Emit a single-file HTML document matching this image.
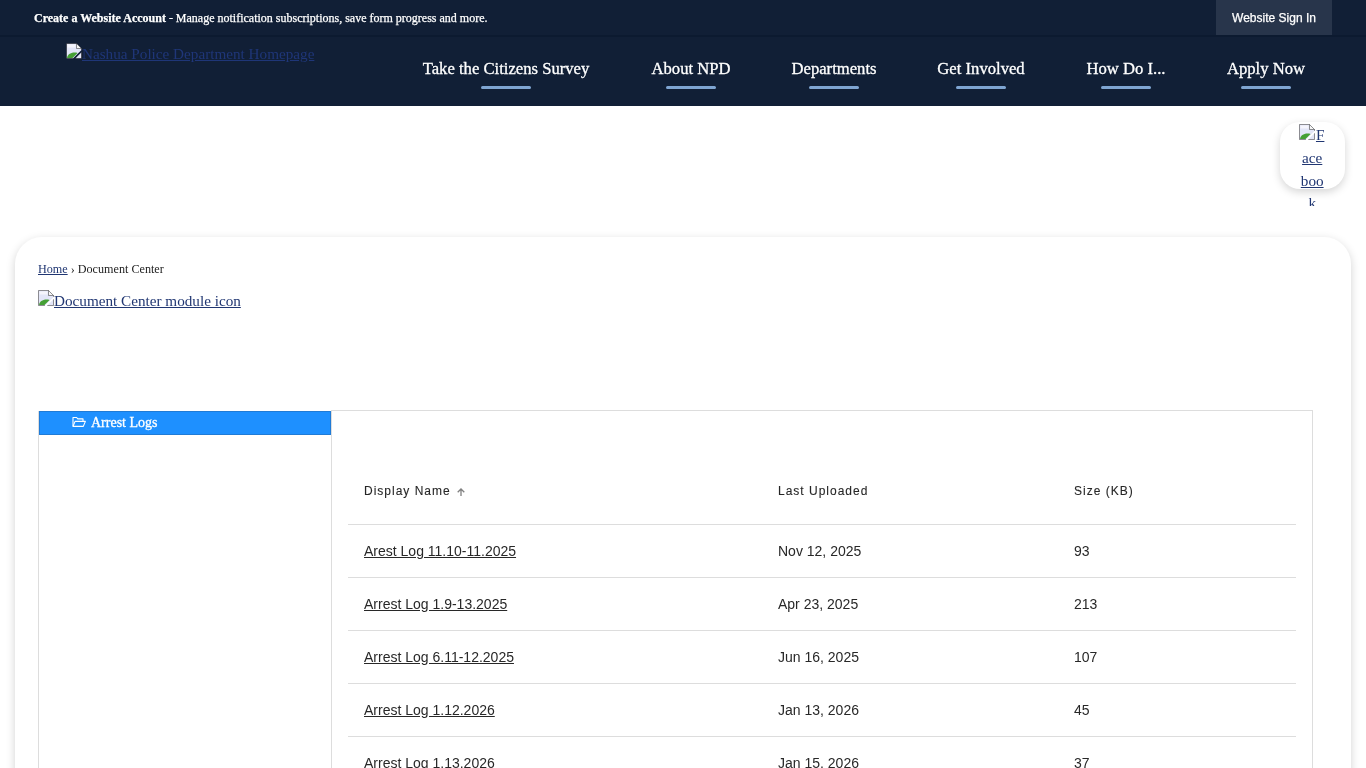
<!DOCTYPE html>
<html lang="en">
<head>
<meta charset="utf-8">
<title>Document Center • Nashua Police Department</title>
<style>
*{box-sizing:border-box;margin:0;padding:0}
html,body{width:1366px;height:768px;overflow:hidden;background:#fff}
body{position:relative;font-family:"Liberation Serif",serif;color:#222}
a{color:#203672;text-decoration:underline}
.abs{position:absolute;white-space:nowrap;will-change:transform}

/* top bar */
#topbar{left:0;top:0;width:1366px;height:35px;background:#111f36}
#topmsg{left:34px;top:11px;font-size:12px;line-height:14px;color:#fff;-webkit-text-stroke:.25px #fff}
#topmsg b{font-weight:bold}
#signin{left:1216px;top:0;width:116px;height:35px;background:#28354b;color:#fff;
  font-family:"Liberation Sans",sans-serif;font-size:12px;line-height:37px;text-align:center;-webkit-text-stroke:.25px #fff}

/* nav bar */
#navbar{left:0;top:35px;width:1366px;height:71px;background:#111f36;box-shadow:inset 0 2px 0 #0c1a30}
.brokenimg{display:inline-block;width:16px;height:16px;vertical-align:baseline}
#logo{left:66px;top:43px;font-size:15.2px;line-height:18px}
#logo a{color:#1f3678}
.nav{top:59px;font-size:16.65px;line-height:20px;color:#fff;text-align:center;transform:translateX(-50%);-webkit-text-stroke:.3px #fff}
.bar{top:86px;width:50px;height:3px;background:#7fa5d2;border-radius:1.5px;transform:translateX(-50%)}

/* facebook */
#fbwrap{left:1270px;top:110px;width:96px;height:96px;overflow:hidden}
#fb{position:absolute;left:10px;top:12px;width:65px;height:67px;border-radius:20px;background:#fff;
  box-shadow:0 3px 9px rgba(0,0,0,.17)}
#fbtxt{position:absolute;left:29.2px;top:14px;width:26px;font-size:15.2px;line-height:22.8px;text-align:center;
  word-break:break-all;white-space:normal}
#fbtxt .brokenimg{margin-left:-1px;margin-right:1px}

/* card */
#card{left:15px;top:237px;width:1336px;height:600px;border-radius:27px 27px 0 0;background:#fff;
  box-shadow:0 3px 10px rgba(0,0,0,.18)}
#crumb{left:38px;top:262px;font-size:12.15px;line-height:14px;color:#222}
#modicon{left:38px;top:290px;font-size:15.2px;line-height:18px}

/* panels */
#side{left:38px;top:411px;width:294px;height:400px;border-left:1px solid #ddd;border-right:1px solid #ddd}
#sel{left:39px;top:411px;width:292px;height:24px;background:#1e90ff;box-shadow:inset 0 0 0 1px rgba(40,60,90,.25)}
#seltxt{left:91px;top:415px;font-size:14px;line-height:16px;color:#fff;-webkit-text-stroke:.3px #fff}
#folder{left:72px;top:416px}
#main{left:331px;top:410px;width:982px;height:400px;border:1px solid #ddd;border-bottom:0}

.th{font-family:"Liberation Sans",sans-serif;font-size:12px;line-height:14px;letter-spacing:1px;color:#262626;-webkit-text-stroke:.1px #262626}
.td{font-family:"Liberation Sans",sans-serif;font-size:14px;line-height:16px;color:#282828}
.td a{color:#282828}
.hr{left:348px;width:948px;height:1px;background:#ddd}
</style>
</head>
<body>

<div id="topbar" class="abs"></div>
<div id="topmsg" class="abs"><b>Create a Website Account</b> - Manage notification subscriptions, save form progress and more.</div>
<div id="signin" class="abs">Website Sign In</div>

<div id="navbar" class="abs"></div>
<div id="logo" class="abs"><a><svg class="brokenimg" viewBox="0 0 16 16"><path d="M.5 .5H10.5L15.5 5.5V6.9L6.9 15.5H.5Z" fill="#e3e6f8"/><path d="M15.5 9.3V15.5H9.3Z" fill="#e3e6f8"/><path d="M1.5 1.5H9.5V4.5H1.5Z" fill="#f5f5fc"/><path d="M10.5 .5V5.5H15.5Z" fill="#f6f6f6"/><path d="M1 15C1.6 11.2 5.4 8.7 11.6 9.9L6.5 15Z" fill="#45a035"/><path d="M6.9 15.5H.5V.5H10.5L15.5 5.5V6.9M10.5 .5V5.5H15.5M15.5 9.3V15.5H9.3" fill="none" stroke="rgba(0,0,0,.42)"/></svg>Nashua Police Department Homepage</a></div>

<div class="abs nav" style="left:506px">Take the Citizens Survey</div>
<div class="abs nav" style="left:691px">About NPD</div>
<div class="abs nav" style="left:834px">Departments</div>
<div class="abs nav" style="left:981px">Get Involved</div>
<div class="abs nav" style="left:1126px">How Do I...</div>
<div class="abs nav" style="left:1266px">Apply Now</div>
<div class="abs bar" style="left:506px"></div>
<div class="abs bar" style="left:691px"></div>
<div class="abs bar" style="left:834px"></div>
<div class="abs bar" style="left:981px"></div>
<div class="abs bar" style="left:1126px"></div>
<div class="abs bar" style="left:1266px"></div>

<div id="fbwrap" class="abs">
  <div id="fb"></div>
  <div id="fbtxt"><a><svg class="brokenimg" viewBox="0 0 16 16"><path d="M.5 .5H10.5L15.5 5.5V6.9L6.9 15.5H.5Z" fill="#e3e6f8"/><path d="M15.5 9.3V15.5H9.3Z" fill="#e3e6f8"/><path d="M1.5 1.5H9.5V4.5H1.5Z" fill="#f5f5fc"/><path d="M10.5 .5V5.5H15.5Z" fill="#f6f6f6"/><path d="M1 15C1.6 11.2 5.4 8.7 11.6 9.9L6.5 15Z" fill="#45a035"/><path d="M6.9 15.5H.5V.5H10.5L15.5 5.5V6.9M10.5 .5V5.5H15.5M15.5 9.3V15.5H9.3" fill="none" stroke="rgba(0,0,0,.42)"/></svg>Facebook</a></div>
</div>

<div id="card" class="abs"></div>
<div id="crumb" class="abs"><a>Home</a> › Document Center</div>
<div id="modicon" class="abs"><a><svg class="brokenimg" viewBox="0 0 16 16"><path d="M.5 .5H10.5L15.5 5.5V6.9L6.9 15.5H.5Z" fill="#e3e6f8"/><path d="M15.5 9.3V15.5H9.3Z" fill="#e3e6f8"/><path d="M1.5 1.5H9.5V4.5H1.5Z" fill="#f5f5fc"/><path d="M10.5 .5V5.5H15.5Z" fill="#f6f6f6"/><path d="M1 15C1.6 11.2 5.4 8.7 11.6 9.9L6.5 15Z" fill="#45a035"/><path d="M6.9 15.5H.5V.5H10.5L15.5 5.5V6.9M10.5 .5V5.5H15.5M15.5 9.3V15.5H9.3" fill="none" stroke="rgba(0,0,0,.42)"/></svg>Document Center module icon</a></div>

<div id="side" class="abs"></div>
<div id="main" class="abs"></div>
<div id="sel" class="abs"></div>
<svg id="folder" class="abs" width="14" height="12" viewBox="0 0 14 12"><path d="M1 10V1.5h3.6l1.2 1.4h5.2v2" fill="none" stroke="#fff" stroke-width="1.1" stroke-linejoin="round"/><path d="M1 10.4l2.1-5h10.3l-2.1 5z" fill="none" stroke="#fff" stroke-width="1.1" stroke-linejoin="round"/></svg>
<div id="seltxt" class="abs">Arrest Logs</div>

<div class="abs th" style="left:364px;top:484px">Display Name</div>
<svg class="abs" style="left:457px;top:488px" width="8" height="8" viewBox="0 0 8 8"><path d="M4 8V1M.7 4.3L4 1l3.3 3.3" fill="none" stroke="#808080" stroke-width="1.3"/></svg>
<div class="abs th" style="left:778px;top:484px">Last Uploaded</div>
<div class="abs th" style="left:1074px;top:484px">Size (KB)</div>

<div class="abs hr" style="top:524px"></div>
<div class="abs td" style="left:364px;top:543px"><a>Arest Log 11.10-11.2025</a></div>
<div class="abs td" style="left:778px;top:543px">Nov 12, 2025</div>
<div class="abs td" style="left:1074px;top:543px">93</div>

<div class="abs hr" style="top:577px"></div>
<div class="abs td" style="left:364px;top:596px"><a>Arrest Log 1.9-13.2025</a></div>
<div class="abs td" style="left:778px;top:596px">Apr 23, 2025</div>
<div class="abs td" style="left:1074px;top:596px">213</div>

<div class="abs hr" style="top:630px"></div>
<div class="abs td" style="left:364px;top:649px"><a>Arrest Log 6.11-12.2025</a></div>
<div class="abs td" style="left:778px;top:649px">Jun 16, 2025</div>
<div class="abs td" style="left:1074px;top:649px">107</div>

<div class="abs hr" style="top:683px"></div>
<div class="abs td" style="left:364px;top:702px"><a>Arrest Log 1.12.2026</a></div>
<div class="abs td" style="left:778px;top:702px">Jan 13, 2026</div>
<div class="abs td" style="left:1074px;top:702px">45</div>

<div class="abs hr" style="top:736px"></div>
<div class="abs td" style="left:364px;top:755px"><a>Arrest Log 1.13.2026</a></div>
<div class="abs td" style="left:778px;top:755px">Jan 15, 2026</div>
<div class="abs td" style="left:1074px;top:755px">37</div>

</body>
</html>
